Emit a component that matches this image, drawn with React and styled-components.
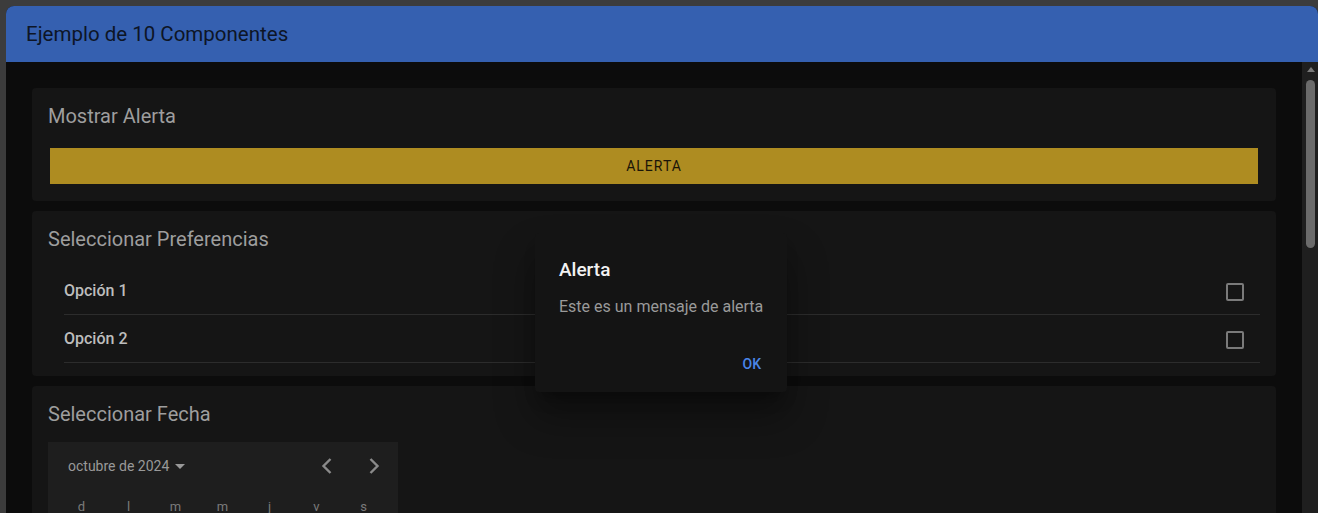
import React from "react";
import styled, { createGlobalStyle } from "styled-components";

const GlobalStyle = createGlobalStyle`
  html, body {
    margin: 0;
    padding: 0;
    height: 100%;
    overflow: hidden;
    background: #3c3c3c;
    font-family: Roboto, "Noto Sans", sans-serif;
  }
`;

const Page = styled.div`
  box-sizing: border-box;
  height: 513px;
  padding: 6px 0 0 6px;
  display: flex;
`;

const Window = styled.div`
  flex: 1;
  display: flex;
  flex-direction: column;
  border-radius: 8px 8px 0 0;
  overflow: hidden;
  background: #0c0c0c;
  position: relative;
`;

const Header = styled.header`
  height: 56px;
  flex-shrink: 0;
  background: #3560b0;
  display: flex;
  align-items: center;
  padding-left: 20px;
  font-size: 20.5px;
  color: #0d1526;
`;

const Body = styled.div`
  flex: 1;
  display: flex;
  min-height: 0;
`;

const Content = styled.main`
  flex: 1;
  padding: 26px 26px 0;
  display: flex;
  flex-direction: column;
  gap: 10px;
  overflow: hidden;
`;

const ScrollTrack = styled.div`
  width: 16px;
  flex-shrink: 0;
  background: #1f1f1f;
  display: flex;
  flex-direction: column;
  align-items: center;
  padding-top: 5px;
`;

const ScrollArrow = styled.div`
  width: 0;
  height: 0;
  border-left: 4px solid transparent;
  border-right: 4px solid transparent;
  border-bottom: 5px solid #7a7a7a;
  margin-left: 1px;
`;

const ScrollThumb = styled.div`
  width: 9px;
  height: 168px;
  margin-top: 8px;
  margin-left: 1px;
  border-radius: 5px;
  background: #6b6b6b;
`;

const Card = styled.section`
  background: #151515;
  border-radius: 4px;
  padding: ${(p) => p.$pad || "12px 16px 17px"};
  flex-shrink: 0;
`;

const CardTitle = styled.h2`
  margin: 0;
  height: 32px;
  line-height: 32px;
  font-size: 20px;
  font-weight: 400;
  color: #9e9e9e;
`;

const AlertButton = styled.button`
  display: block;
  width: calc(100% - 4px);
  margin: 16px 2px 0;
  height: 36px;
  border: none;
  background: #ae8c21;
  color: #1a1508;
  font-family: Roboto, sans-serif;
  font-size: 14px;
  letter-spacing: 1px;
  text-transform: uppercase;
`;

const List = styled.ul`
  list-style: none;
  margin: 12px 0 0;
  padding: 0 0 0 16px;
`;

const Row = styled.li`
  height: 47px;
  display: flex;
  align-items: center;
  justify-content: space-between;
  padding-right: 16px;
  border-bottom: 1px solid #2c2c2c;
  font-size: 16px;
  font-weight: 500;
  color: #bdbdbd;
`;

const Check = styled.span`
  box-sizing: border-box;
  width: 18px;
  height: 18px;
  border: 2px solid #7a7a7a;
  border-radius: 2px;
  margin-top: 2px;
`;

const Calendar = styled.div`
  width: 350px;
  margin-top: 12px;
  background: #1e1e1e;
  padding-bottom: 20px;
`;

const CalHeader = styled.div`
  height: 48px;
  display: flex;
  align-items: center;
  padding: 0 1px 0 20px;
  font-size: 14px;
  color: #999;
`;

const MonthLabel = styled.span`
  display: flex;
  align-items: center;
  gap: 6px;
  flex: 1;
`;

const Caret = styled.span`
  width: 0;
  height: 0;
  border-left: 5px solid transparent;
  border-right: 5px solid transparent;
  border-top: 5px solid #999;
`;

const NavButton = styled.span`
  width: 47px;
  display: flex;
  justify-content: center;
  color: #8a8a8a;
`;

const WeekGrid = styled.div`
  display: grid;
  grid-template-columns: repeat(7, 47px);
  padding: 0 10px;
  row-gap: 10px;
  margin-top: 6px;
`;

const DayCell = styled.span`
  text-align: center;
  font-size: 13px;
  line-height: 22px;
  color: ${(p) => (p.$head ? "#7a7a7a" : "#bbb")};
`;

const Dialog = styled.div`
  position: absolute;
  left: 529px;
  top: 227px;
  width: 252px;
  height: 159px;
  box-sizing: border-box;
  background: #141414;
  border-radius: 4px;
  box-shadow: 0 11px 15px -7px rgba(0, 0, 0, 0.4), 0 24px 38px 3px rgba(0, 0, 0, 0.3);
  padding: 24px 16px 0 24px;
  display: flex;
  flex-direction: column;
`;

const DialogTitle = styled.h3`
  margin: 0;
  font-size: 19px;
  font-weight: 500;
  line-height: 26px;
  color: #f2f2f2;
`;

const DialogText = styled.p`
  margin: 12px 0 0;
  font-size: 16px;
  line-height: 24px;
  white-space: nowrap;
  color: #9a9a9a;
`;

const DialogActions = styled.div`
  display: flex;
  justify-content: flex-end;
  margin-top: 37px;
  margin-right: 10px;
`;

const OkButton = styled.span`
  font-size: 14px;
  font-weight: 500;
  color: #4a86e8;
`;

const Chevron = ({ dir }) => (
  <svg width="14" height="18" viewBox="0 0 14 18">
    <path
      d={dir === "left" ? "M10.5 2 L3.5 9 L10.5 16" : "M3.5 2 L10.5 9 L3.5 16"}
      fill="none"
      stroke="currentColor"
      strokeWidth="2.4"
    />
  </svg>
);

const weekDays = ["d", "l", "m", "m", "j", "v", "s"];
// octubre 2024 empieza en martes
const days = [null, null, ...Array.from({ length: 31 }, (_, i) => i + 1)];

export default function App() {
  return (
    <>
      <GlobalStyle />
      <Page>
        <Window>
          <Header>Ejemplo de 10 Componentes</Header>
          <Body>
            <Content>
              <Card>
                <CardTitle>Mostrar Alerta</CardTitle>
                <AlertButton>Alerta</AlertButton>
              </Card>
              <Card $pad="12px 16px 13px">
                <CardTitle>Seleccionar Preferencias</CardTitle>
                <List>
                  <Row>
                    Opción 1 <Check />
                  </Row>
                  <Row>
                    Opción 2 <Check />
                  </Row>
                </List>
              </Card>
              <Card $pad="12px 16px 16px">
                <CardTitle>Seleccionar Fecha</CardTitle>
                <Calendar>
                  <CalHeader>
                    <MonthLabel>
                      octubre de 2024 <Caret />
                    </MonthLabel>
                    <NavButton>
                      <Chevron dir="left" />
                    </NavButton>
                    <NavButton>
                      <Chevron dir="right" />
                    </NavButton>
                  </CalHeader>
                  <WeekGrid>
                    {weekDays.map((d, i) => (
                      <DayCell key={"h" + i} $head>
                        {d}
                      </DayCell>
                    ))}
                    {days.map((d, i) => (
                      <DayCell key={i}>{d}</DayCell>
                    ))}
                  </WeekGrid>
                </Calendar>
              </Card>
            </Content>
            <ScrollTrack>
              <ScrollArrow />
              <ScrollThumb />
            </ScrollTrack>
          </Body>
          <Dialog>
            <DialogTitle>Alerta</DialogTitle>
            <DialogText>Este es un mensaje de alerta</DialogText>
            <DialogActions>
              <OkButton>OK</OkButton>
            </DialogActions>
          </Dialog>
        </Window>
      </Page>
    </>
  );
}
